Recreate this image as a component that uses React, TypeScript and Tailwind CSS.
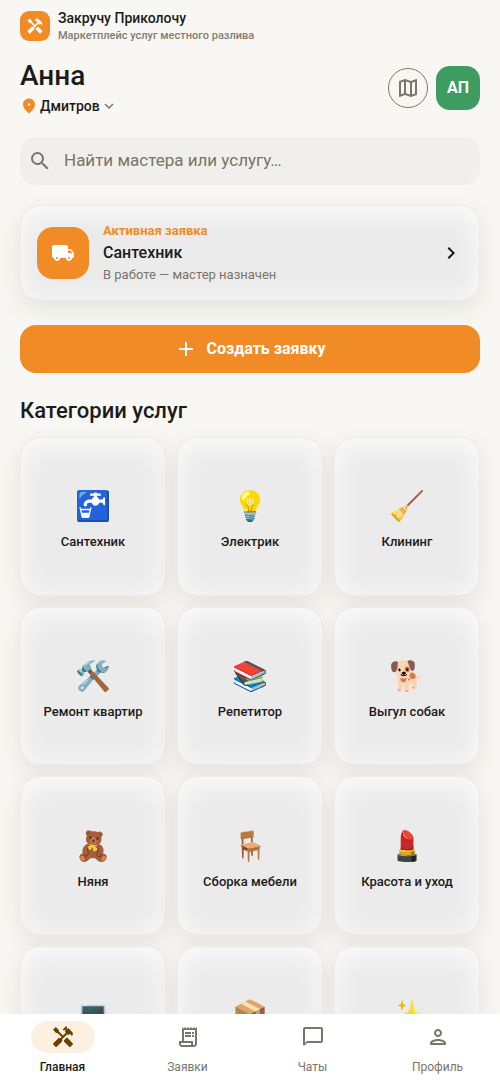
import {
  MdAdd,
  MdChevronRight,
  MdExpandMore,
  MdHandyman,
  MdOutlineMap,
  MdOutlineReceiptLong,
  MdSearch,
} from "react-icons/md";

const categories = [
  { emoji: "🚰", label: "Сантехник" },
  { emoji: "💡", label: "Электрик" },
  { emoji: "🧹", label: "Клининг" },
  { emoji: "🛠️", label: "Ремонт квартир" },
  { emoji: "📚", label: "Репетитор" },
  { emoji: "🐕", label: "Выгул собак" },
  { emoji: "🧸", label: "Няня" },
  { emoji: "🪑", label: "Сборка мебели" },
  { emoji: "💄", label: "Красота и уход" },
  { emoji: "💻", label: "Компьютеры" },
  { emoji: "📦", label: "Переезды" },
  { emoji: "✨", label: "Другое" },
];

const tabs = [
  { icon: MdHandyman, label: "Главная", active: true },
  { icon: MdOutlineReceiptLong, label: "Заявки" },
  { icon: ChatIcon, label: "Чаты" },
  { icon: PersonIcon, label: "Профиль" },
];

const card =
  "border border-[#efece6] bg-[#ebebeb] shadow-[inset_0_5px_28px_rgba(255,255,255,0.9),0_8px_24px_rgba(50,45,30,0.1)]";

function PinIcon({ className }: { className?: string }) {
  return (
    <svg viewBox="0 0 24 24" fill="currentColor" className={className} aria-hidden="true">
      <path d="M12 2C7.8 2 4 5.22 4 10.2c0 3.18 2.45 6.92 7.34 11.23.38.33.95.33 1.33 0C17.55 17.12 20 13.38 20 10.2 20 5.22 16.2 2 12 2zm0 9.7a1.7 1.7 0 1 1 0-3.4 1.7 1.7 0 0 1 0 3.4z" />
    </svg>
  );
}

function TruckIcon({ className }: { className?: string }) {
  return (
    <svg viewBox="0 0 24 24" fill="currentColor" className={className} aria-hidden="true">
      <path d="M19.5 8H17V6c0-1.1-.9-2-2-2H3c-1.1 0-2 .9-2 2v9c0 1.1.9 2 2 2 0 1.66 1.34 3 3 3s3-1.34 3-3h6c0 1.66 1.34 3 3 3s3-1.34 3-3h1c.55 0 1-.45 1-1v-3.33c0-.43-.14-.85-.4-1.2L20.3 8.4c-.19-.25-.49-.4-.8-.4zM6 18c-.55 0-1-.45-1-1s.45-1 1-1 1 .45 1 1-.45 1-1 1zm13.5-8.5l1.96 2.5H17V9.5h2.5zM18 18c-.55 0-1-.45-1-1s.45-1 1-1 1 .45 1 1-.45 1-1 1z" />
    </svg>
  );
}

function ChatIcon({ className }: { className?: string }) {
  return (
    <svg viewBox="0 0 24 24" fill="currentColor" className={className} aria-hidden="true">
      <path d="M20 2H4c-1.1 0-2 .9-2 2v15.59c0 .89 1.08 1.33 1.71.71L6 18h14c1.1 0 2-.9 2-2V4c0-1.1-.9-2-2-2zm0 14H6l-2 2V4h16v12z" />
    </svg>
  );
}

function PersonIcon({ className }: { className?: string }) {
  return (
    <svg viewBox="0 0 24 24" fill="currentColor" className={className} aria-hidden="true">
      <path d="M12 6c1.1 0 2 .9 2 2s-.9 2-2 2-2-.9-2-2 .9-2 2-2m0 10c2.7 0 5.8 1.29 6 2H6c.23-.72 3.31-2 6-2m0-12C9.79 4 8 5.79 8 8s1.79 4 4 4 4-1.79 4-4-1.79-4-4-4zm0 10c-2.67 0-8 1.34-8 4v1c0 .55.45 1 1 1h14c.55 0 1-.45 1-1v-1c0-2.66-5.33-4-8-4z" />
    </svg>
  );
}

export default function App() {
  return (
    <div className="flex h-screen flex-col overflow-hidden bg-[#f8f7f3] font-['Roboto','Noto_Color_Emoji',sans-serif] text-[#1c1b19]">
      <main className="min-h-0 flex-1 overflow-y-auto px-5 pt-2 pb-5 [scrollbar-width:none]">
        <header className="flex items-center gap-2">
          <span className="flex size-[30px] items-center justify-center rounded-[9px] bg-[#f18b26] text-white">
            <MdHandyman className="size-[18px]" />
          </span>
          <div>
            <p className="text-sm leading-5 font-medium">Закручу Приколочу</p>
            <p className="text-[11px] leading-4 font-medium text-[#857b70]">
              Маркетплейс услуг местного разлива
            </p>
          </div>
        </header>

        <div className="mt-3.5 flex items-center justify-between">
          <div>
            <h1 className="text-[28px] leading-9 font-medium">Анна</h1>
            <button type="button" className="flex h-6 items-center text-sm font-medium">
              <PinIcon className="mr-0.5 size-[18px] text-[#f18b26]" />
              Дмитров
              <MdExpandMore className="size-[18px] text-[#7b7468]" />
            </button>
          </div>
          <div className="flex items-center gap-2">
            <button
              type="button"
              aria-label="Карта"
              className="flex size-10 items-center justify-center rounded-full border border-[#857468] text-[#7b7468]"
            >
              <MdOutlineMap className="size-6" />
            </button>
            <button
              type="button"
              aria-label="Профиль Анны"
              className="size-11 rounded-[14px] bg-[#3f9c60] font-bold text-white"
            >
              АП
            </button>
          </div>
        </div>

        <label className="mt-[19px] flex h-12 items-center gap-3 rounded-2xl bg-[#f0efeb] px-2">
          <MdSearch className="size-6 shrink-0 text-[#7b7468]" aria-hidden="true" />
          <input
            type="search"
            aria-label="Поиск"
            placeholder="Найти мастера или услугу…"
            className="min-w-0 flex-1 bg-transparent text-[17px] outline-none placeholder:text-[#7b7468]"
          />
        </label>

        <a href="#order" className={`mt-5 flex h-24 items-center gap-3.5 rounded-[20px] px-4 ${card}`}>
          <span className="flex size-[52px] items-center justify-center rounded-2xl bg-[#f18b26] text-white">
            <TruckIcon className="size-6" />
          </span>
          <span className="flex flex-1 flex-col">
            <span className="text-[13px] leading-5 font-bold text-[#f18b26]">Активная заявка</span>
            <span className="text-base leading-6 font-medium">Сантехник</span>
            <span className="text-[13px] leading-5 text-[#7b7468]">В работе — мастер назначен</span>
          </span>
          <MdChevronRight className="size-6" />
        </a>

        <button
          type="button"
          className="mt-6 flex h-12 w-full items-center justify-center gap-2 rounded-2xl bg-[#f18b26] font-bold text-white"
        >
          <MdAdd className="size-6" />
          Создать заявку
        </button>

        <h2 className="mt-6 text-[22px] leading-7 font-medium">Категории услуг</h2>

        <div className="mt-3 grid grid-cols-3 gap-[11px]">
          {categories.map(({ emoji, label }) => (
            <button
              key={label}
              type="button"
              className={`flex aspect-[23/25] flex-col items-center justify-center gap-2 rounded-[20px] pt-1 ${card}`}
            >
              <span className="text-[29px] leading-10">{emoji}</span>
              <span className="text-[13px] leading-4 font-medium">{label}</span>
            </button>
          ))}
        </div>
      </main>

      <nav className="grid h-[68px] shrink-0 grid-cols-4 bg-white">
        {tabs.map(({ icon: Icon, label, active }) => (
          <a
            key={label}
            href="#tab"
            aria-current={active ? "page" : undefined}
            className={`flex flex-col items-center gap-1.5 pt-[7px] text-xs ${
              active ? "font-medium text-[#1c1b19]" : "text-[#7b7468]"
            }`}
          >
            <span
              className={`flex h-8 w-16 items-center justify-center rounded-full ${
                active ? "bg-[#fdf0e0] text-[#6b4100]" : ""
              }`}
            >
              <Icon className="size-6" />
            </span>
            {label}
          </a>
        ))}
      </nav>
    </div>
  );
}
